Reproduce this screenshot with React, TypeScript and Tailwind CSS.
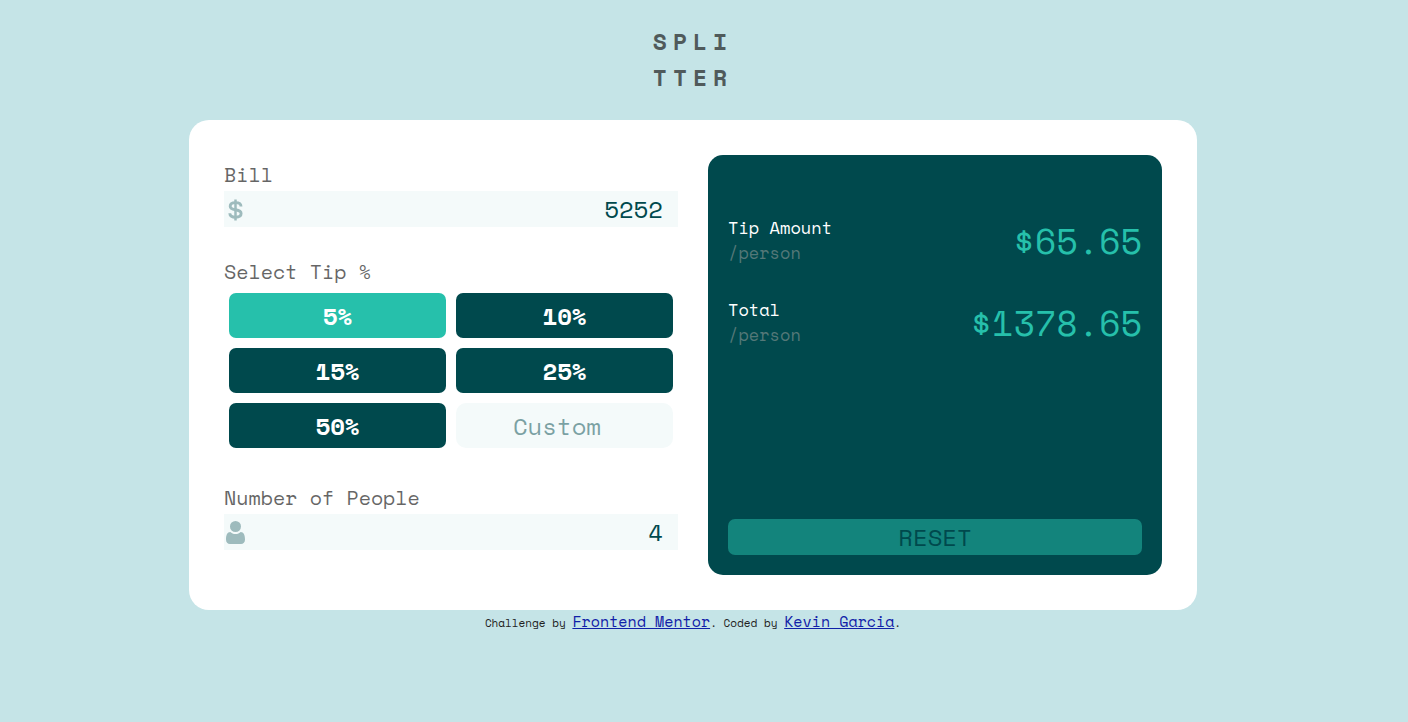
import { useState } from "react";

const TIPS = [5, 10, 15, 25, 50];

function DollarIcon() {
  return (
    <svg viewBox="0 -2 15 24" className="h-6 w-[15px]" fill="none" stroke="#9ebbbd" aria-hidden="true">
      <path
        d="M13 7.4C13 4.9 10.8 3.6 7.5 3.6S2.2 5 2.2 7.2c0 2.4 2 3.1 5.3 3.6 3.5 0.5 5.6 1.3 5.6 3.8 0 2.3-2.2 3.7-5.6 3.7S1.8 16.9 1.8 14.2"
        strokeWidth="2.9"
      />
      <path d="M7.5 0.5v21" strokeWidth="2.5" />
    </svg>
  );
}

function PersonIcon() {
  return (
    <svg viewBox="0 0 19 23" className="h-[23px] w-[19px]" fill="#9ebbbd" aria-hidden="true">
      <circle cx="9.5" cy="5.5" r="5.5" />
      <path d="M4.3 11C1.3 11 0 14 0 18.5 0 21.4 1.6 23 4 23h11c2.4 0 4-1.6 4-4.5C19 14 17.7 11 14.7 11c-1.3 1.2-3 2.1-5.2 2.1S5.6 12.2 4.3 11z" />
    </svg>
  );
}

type FieldProps = {
  id: string;
  label: string;
  value: string;
  onChange: (value: string) => void;
  icon: React.ReactNode;
};

function Field({ id, label, value, onChange, icon }: FieldProps) {
  return (
    <div className="flex flex-col">
      <label htmlFor={id} className="pb-[2px] text-[20px] leading-7 text-black opacity-60">
        {label}
      </label>
      <div className="flex h-9 items-center bg-[#f4fafa]">
        <span className="flex w-[22px] shrink-0 justify-center">{icon}</span>
        <input
          id={id}
          type="text"
          inputMode="numeric"
          value={value}
          onChange={(e) => onChange(e.target.value)}
          className="h-full w-full min-w-0 bg-transparent pr-[15px] text-right text-2xl text-[#00494d] outline-none"
        />
      </div>
    </div>
  );
}

function Result({ label, amount }: { label: string; amount: number }) {
  return (
    <div className="flex items-center justify-between">
      <div className="text-[17px] leading-[25px]">
        <p className="font-medium text-white">{label}</p>
        <p className="text-[#547878]">/person</p>
      </div>
      <output className="pt-[2px] text-[35px] leading-[48px]">${amount.toFixed(2)}</output>
    </div>
  );
}

export default function App() {
  const [bill, setBill] = useState("5252");
  const [people, setPeople] = useState("4");
  const [tip, setTip] = useState(5);
  const [custom, setCustom] = useState("");

  const count = Number(people) || 1;
  const total = Number(bill) || 0;
  const rate = custom ? Number(custom) || 0 : tip;
  const tipEach = (total * rate) / 100 / count;

  const reset = () => {
    setBill("");
    setPeople("");
    setCustom("");
    setTip(0);
  };

  return (
    <div className="flex min-h-screen flex-col items-center bg-[#c5e4e7] pt-[23px] pr-[22px] pb-6 font-['Space_Mono','Liberation_Mono',monospace]">
      <h1 className="mb-[25px] text-[23px] leading-9 font-bold tracking-[6px] text-[#505a5b]">
        SPLI
        <br />
        TTER
      </h1>
      <main className="grid w-full max-w-[1008px] grid-cols-1 gap-[30px] rounded-[20px] bg-white p-[35px] md:grid-cols-2">
        <section className="flex flex-col gap-[31px] pt-[6px] pb-[25px]">
          <Field id="bill" label="Bill" value={bill} onChange={setBill} icon={<DollarIcon />} />
          <fieldset className="min-w-0">
            <legend className="pb-[2px] text-[20px] leading-7 text-black opacity-60">Select Tip %</legend>
            <div className="grid grid-cols-2 gap-[10px] p-[5px]">
              {TIPS.map((t) => (
                <button
                  key={t}
                  type="button"
                  aria-pressed={tip === t}
                  onClick={() => {
                    setTip(t);
                    setCustom("");
                  }}
                  className={
                    tip === t
                      ? "h-[45px] rounded-[7px] bg-[#26c0ab] text-2xl font-bold text-white"
                      : "h-[45px] rounded-[7px] bg-[#00494d] text-2xl font-bold text-white"
                  }
                >
                  {t}%
                </button>
              ))}
              <input
                type="text"
                inputMode="numeric"
                aria-label="Custom tip percentage"
                placeholder="Custom"
                value={custom}
                onChange={(e) => setCustom(e.target.value)}
                className="h-[45px] w-full min-w-0 rounded-[10px] bg-[#f4fafa] pr-[15px] text-center text-2xl text-[#00494d] outline-none placeholder:text-[#00494d] placeholder:opacity-50"
              />
            </div>
          </fieldset>
          <Field id="people" label="Number of People" value={people} onChange={setPeople} icon={<PersonIcon />} />
        </section>
        <section className="flex flex-col justify-between rounded-[15px] bg-[#00494d] px-5 pt-[60px] pb-5">
          <div className="flex flex-col gap-8 text-[#26c0ab]">
            <Result label="Tip Amount" amount={tipEach} />
            <Result label="Total" amount={total / count + tipEach} />
          </div>
          <button type="button" onClick={reset} className="h-9 rounded-[7px] bg-[#13847c] text-2xl text-[#00494d]">
            RESET
          </button>
        </section>
      </main>
      <footer className="text-[11px] leading-[22px] text-[#222]">
        Challenge by{" "}
        <a href="https://www.frontendmentor.io" className="text-[15px] text-[#1020a8] underline">
          Frontend Mentor
        </a>
        . Coded by{" "}
        <a href="#kevin-garcia" className="text-[15px] text-[#1020a8] underline">
          Kevin Garcia
        </a>
        .
      </footer>
    </div>
  );
}
